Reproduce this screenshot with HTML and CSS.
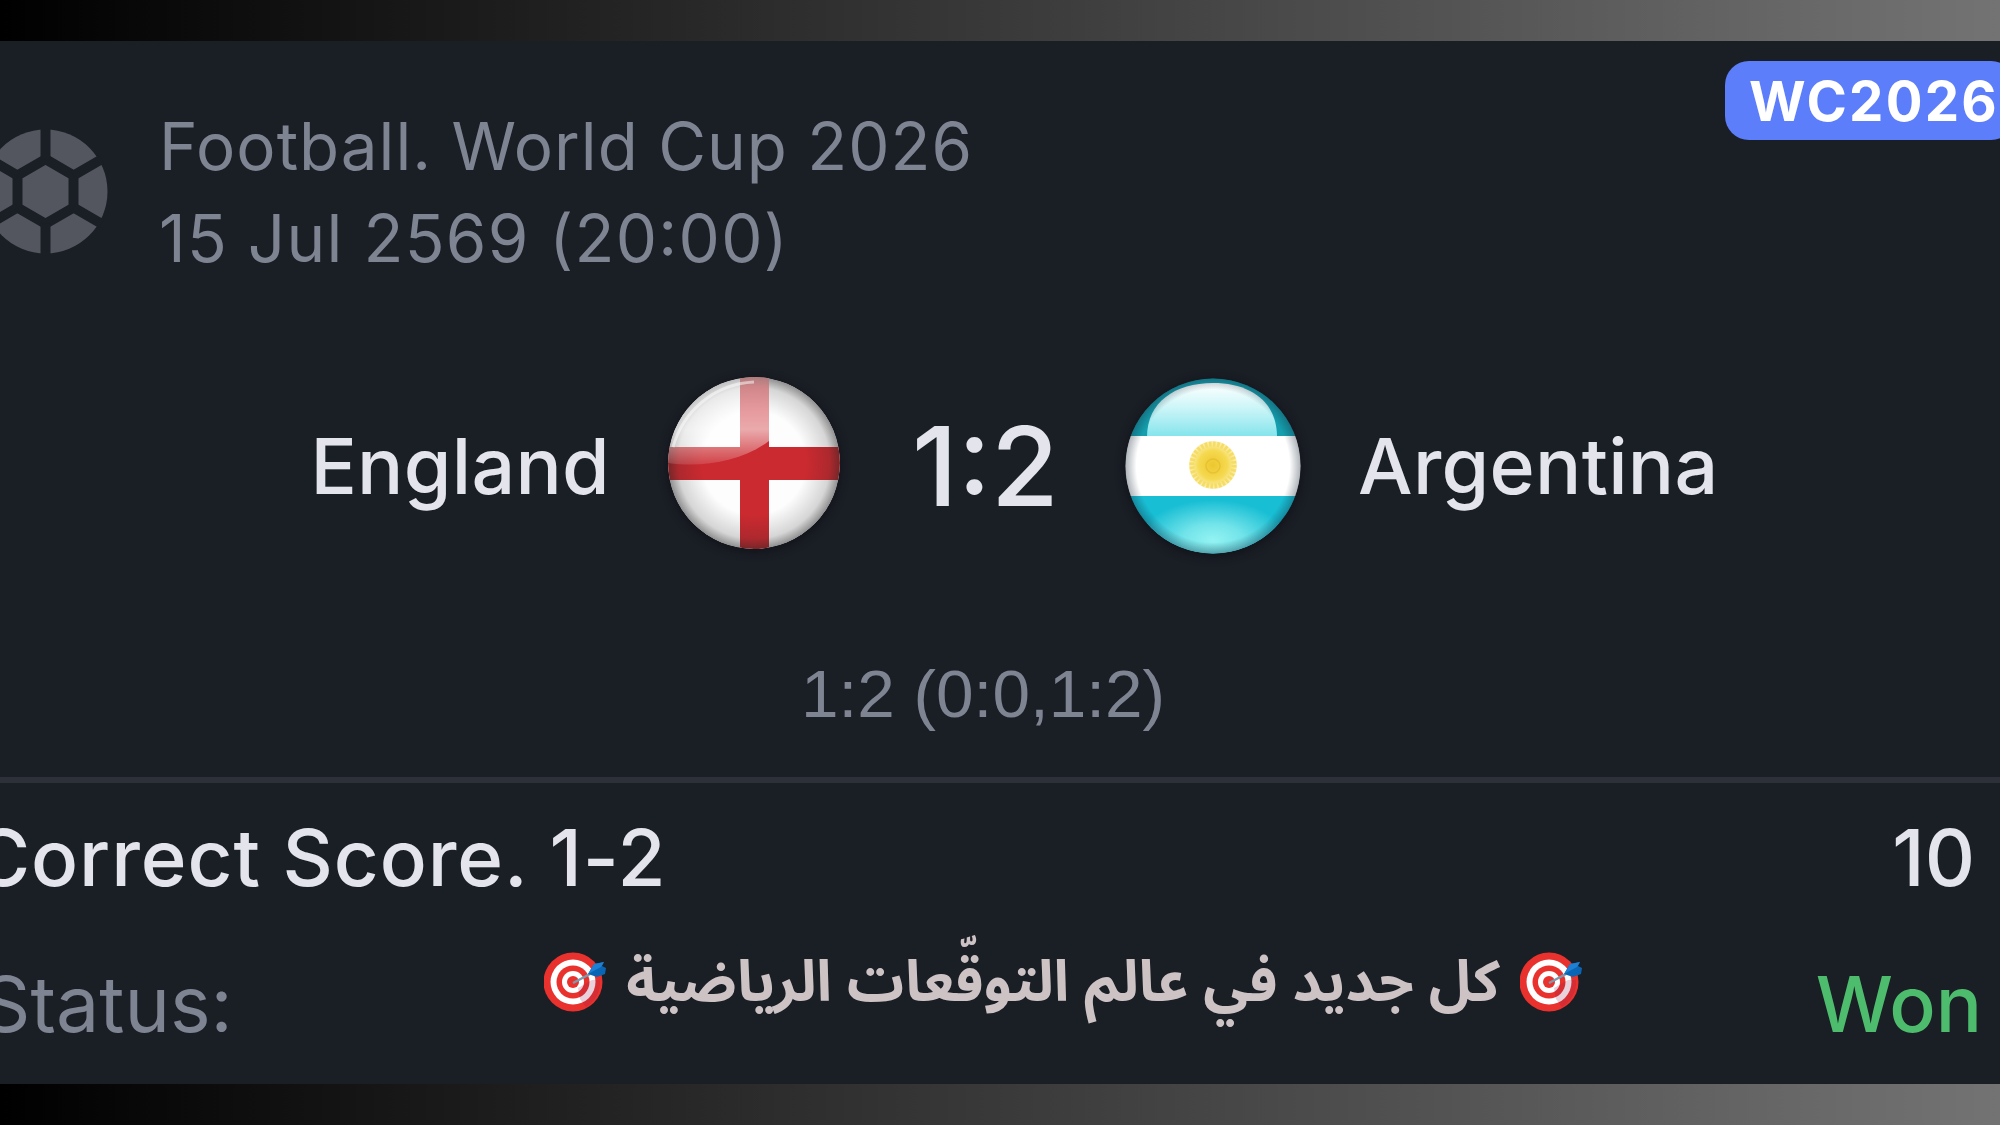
FILE: index.html
```
<!DOCTYPE html>
<html lang="en">
<head>
    <meta charset="UTF-8">
    <meta name="viewport" content="width=device-width, initial-scale=1.0">
    <title>World Cup 2026</title>
    <link rel="stylesheet" href="styles.css">
</head>
<body>
    <div class="container">
        <div class="header">
            <svg class="ball" viewBox="-62.5 -62.5 125 125">
                <circle r="62" fill="#54565f"/>
                <g fill="none" stroke="#1a1e25" stroke-width="10">
                    <path d="M0-32.3 28-16.2V16.2L0 32.3-28 16.2V-16.2Z"/>
                    <path d="M0-32V-64M28-16 56-32.3M28 16 56 32.3M0 32V64M-28 16-56 32.3M-28-16-56-32.3"/>
                </g>
            </svg>
            <div class="info">
                <div class="league">Football. World Cup 2026</div>
                <div class="date">15 Jul 2569 (<span class="time">20:00</span>)</div>
            </div>
            <div class="tag">WC2026</div>
        </div>
        <div class="match">
            <div class="team home">England</div>
            <svg class="flag eng" viewBox="0 0 172 172">
                <defs>
                    <clipPath id="engClip"><circle cx="86" cy="86" r="86"/></clipPath>
                    <radialGradient id="engShade">
                        <stop offset="0.6" stop-color="#222" stop-opacity="0"/>
                        <stop offset="0.88" stop-color="#222" stop-opacity="0.18"/>
                        <stop offset="1" stop-color="#222" stop-opacity="0.5"/>
                    </radialGradient>
                    <linearGradient id="engGloss" x1="0" y1="0" x2="0" y2="1">
                        <stop offset="0" stop-color="#fff" stop-opacity="0.4"/>
                        <stop offset="0.6" stop-color="#fff" stop-opacity="0.6"/>
                        <stop offset="1" stop-color="#fff" stop-opacity="0.12"/>
                    </linearGradient>
                </defs>
                <g clip-path="url(#engClip)">
                    <rect width="172" height="172" fill="#fdfdfd"/>
                    <rect x="72" width="29" height="172" fill="#cb2a30"/>
                    <rect y="70" width="172" height="33" fill="#cb2a30"/>
                    <circle cx="86" cy="86" r="86" fill="url(#engShade)"/>
                    <path d="M0 86C35 91 75 84 101 64V0H0Z" fill="url(#engGloss)"/>
                    <path d="M5 70C15 35 45 7 86 5" fill="none" stroke="#fff" stroke-opacity="0.5" stroke-width="3"/>
                </g>
            </svg>
            <div class="score">1:2</div>
            <svg class="flag arg" viewBox="0 0 176 176">
                <defs>
                    <clipPath id="argClip"><circle cx="88" cy="88" r="87.5"/></clipPath>
                    <linearGradient id="argGloss" x1="0" y1="0" x2="0" y2="1">
                        <stop offset="0" stop-color="#fff"/>
                        <stop offset="0.45" stop-color="#cdf6f8"/>
                        <stop offset="1" stop-color="#83e4ec"/>
                    </linearGradient>
                    <radialGradient id="argGlow">
                        <stop offset="0" stop-color="#94f3f2"/>
                        <stop offset="0.4" stop-color="#72e4ea"/>
                        <stop offset="1" stop-color="#18bed4"/>
                    </radialGradient>
                    <radialGradient id="argShade">
                        <stop offset="0.87" stop-color="#123" stop-opacity="0"/>
                        <stop offset="1" stop-color="#123" stop-opacity="0.35"/>
                    </radialGradient>
                    <radialGradient id="sun">
                        <stop offset="0" stop-color="#edc72f"/>
                        <stop offset="0.6" stop-color="#f5d950"/>
                        <stop offset="1" stop-color="#fae88f" stop-opacity="0.7"/>
                    </radialGradient>
                </defs>
                <g clip-path="url(#argClip)">
                    <rect width="176" height="59" fill="#159fae"/>
                    <path d="M22 59C22 24 50 5 88 5S152 24 152 59Z" fill="url(#argGloss)"/>
                    <rect y="117" width="176" height="59" fill="#18bed4"/>
                    <ellipse cx="88" cy="162" rx="74" ry="40" fill="url(#argGlow)"/>
                    <rect y="58" width="176" height="60" fill="#fff"/>
                    <circle cx="88" cy="88" r="88" fill="url(#argShade)"/>
                    <circle cx="88" cy="87" r="24" fill="url(#sun)"/>
                    <circle cx="88" cy="87" r="21" fill="none" stroke="#f5dc64" stroke-width="5" stroke-dasharray="2.5 1.6"/>
                    <circle cx="88" cy="88" r="7" fill="none" stroke="#d9ad1f" stroke-opacity="0.4" stroke-width="1.5"/>
                </g>
            </svg>
            <div class="team away">Argentina</div>
        </div>
        <div class="periods">1:2 (0:0,1:2)</div>
        <div class="row bet">
            <div class="label">Correct Score. 1-2</div>
            <div class="odds">10</div>
        </div>
        <div class="row status">
            <div class="label">Status:</div>
            <div class="promo" dir="rtl">
                <svg class="target" viewBox="0 0 62 60"><use href="#target"/></svg>
                <span class="slogan" lang="ar">كل جديد في عالم التوقّعات الرياضية</span>
                <svg class="target" viewBox="0 0 62 60">
                    <g id="target">
                        <circle cx="29" cy="30" r="29.5" fill="#e9322d"/>
                        <circle cx="29" cy="30" r="22.5" fill="#fff"/>
                        <circle cx="29" cy="30" r="16.5" fill="#e9322d"/>
                        <circle cx="29" cy="30" r="11" fill="#fff"/>
                        <circle cx="29" cy="30" r="6" fill="#e9322d"/>
                        <path d="M34 36 48 28 56 28A29.5 29.5 0 0 1 42 55L36 47Z" fill="#8e1650" fill-opacity="0.2"/>
                        <path d="M29 31 46 22" stroke="#7b9aaf" stroke-width="2.5"/>
                        <path d="M44 22 50 12 60 10 58 14 62 16 61 22 53 25Z" fill="#0a66b5"/>
                        <path d="M44 22 50 12 60 10 57 15Z" fill="#1f7fd2"/>
                    </g>
                </svg>
            </div>
            <div class="result">Won</div>
        </div>
    </div>
</body>
</html>
```
FILE: styles.css
```
* { box-sizing: border-box}
body { margin: 0; padding: 41px 0; width: 2000px; height: 1125px; overflow: hidden; background: linear-gradient(to right, #000, #737373); font-family: Inter, "Noto Sans", sans-serif}
.container { height: 1043px; overflow: hidden; background-color: #1a1e25; white-space: nowrap}
.header { display: flex; height: 325px; align-items: flex-start; color: #7f8492}
.ball { flex: none; width: 125px; height: 125px; margin: 88px 0 0 -17px}
.info { margin: 60px 0 0 51px; font-size: 65.5px; line-height: 91.5px}
.league { letter-spacing: 1px}
.date { letter-spacing: 1.3px; font-feature-settings: "calt" 0}
.time { font-feature-settings: "calt" 1}
.tag { flex: none; width: 290px; height: 79px; margin: 20px -15px 0 auto; padding-left: 24px; border-radius: 24px; background-color: #5d7efb; color: #fff; font-size: 54.6px; font-weight: 700; line-height: 80px; letter-spacing: 2.2px}
.match { display: grid; grid-template-columns: 607px 61px 172px 285px 176px 59px 1fr; align-items: center; height: 200px; color: #e3e4ec; font-weight: 500}
.team { font-size: 77px; letter-spacing: 0.3px}
.home { margin-right: -3px; text-align: right; grid-column: 1}
.flag { border-radius: 50%; box-shadow: 0 2px 10px #101218}
.eng { grid-column: 3; width: 172px; height: 172px; margin-top: -6px}
.score { grid-column: 4; padding-left: 6px; font-size: 110px; text-align: center}
.arg { grid-column: 5; width: 176px; height: 176px}
.away { grid-column: 7; margin-left: -2px}
.periods { height: 211px; padding: 83px 34px 0 0; text-align: center; font-family: "Liberation Sans", sans-serif; font-size: 67.5px; line-height: 90px; color: #7f8492}
.row { display: flex; justify-content: space-between; line-height: 100px}
.bet { height: 177px; padding: 25px 25px 0 0; border-top: 6px solid #2d3038; color: #e3e4ec; font-size: 78px; font-weight: 500}
.bet .label { margin-left: -27px; letter-spacing: 0.9px}
.status { font-size: 77px}
.status .label { flex: none; width: 563px; margin-left: -19px; color: #7f8492}
.promo { display: flex; flex: none; width: 1038px; height: 60px; align-items: center; justify-content: space-between; margin-top: -2px}
.target { flex: none; width: 62px; height: 60px}
.slogan { margin-top: 2px; color: #cdc3c5; font-family: "Noto Sans Arabic", "DejaVu Sans", sans-serif; font-size: 57px; font-weight: 700; line-height: 60px}
.result { margin-left: auto; padding-right: 18px; color: #4dbd6d; font-weight: 500}
```
